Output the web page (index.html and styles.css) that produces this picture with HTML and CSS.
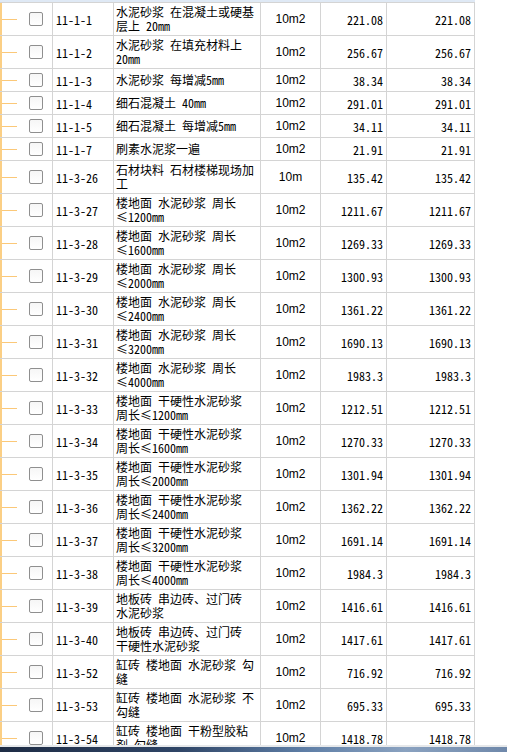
FILE: index.html
```html
<!DOCTYPE html>
<html lang="zh-CN">
<head>
<meta charset="utf-8">
<title>定额列表</title>
<link rel="stylesheet" href="styles.css">
</head>
<body>
<div class="screen">
  <div class="grid">
    <div class="topstrip"></div>
    <div class="row r2"><div class="c tree"><span class="stub"></span><span class="cb"></span></div><div class="c code">11-1-1</div><div class="c desc">水泥砂浆 在混凝土或硬基层上 20mm</div><div class="c unit">10m2</div><div class="c num">221.08</div><div class="c num">221.08</div></div>
    <div class="row r2"><div class="c tree"><span class="stub"></span><span class="cb"></span></div><div class="c code">11-1-2</div><div class="c desc">水泥砂浆 在填充材料上 20mm</div><div class="c unit">10m2</div><div class="c num">256.67</div><div class="c num">256.67</div></div>
    <div class="row r1"><div class="c tree"><span class="stub"></span><span class="cb"></span></div><div class="c code">11-1-3</div><div class="c desc">水泥砂浆 每增减5mm</div><div class="c unit">10m2</div><div class="c num">38.34</div><div class="c num">38.34</div></div>
    <div class="row r1"><div class="c tree"><span class="stub"></span><span class="cb"></span></div><div class="c code">11-1-4</div><div class="c desc">细石混凝土 40mm</div><div class="c unit">10m2</div><div class="c num">291.01</div><div class="c num">291.01</div></div>
    <div class="row r1"><div class="c tree"><span class="stub"></span><span class="cb"></span></div><div class="c code">11-1-5</div><div class="c desc">细石混凝土 每增减5mm</div><div class="c unit">10m2</div><div class="c num">34.11</div><div class="c num">34.11</div></div>
    <div class="row r1"><div class="c tree"><span class="stub"></span><span class="cb"></span></div><div class="c code">11-1-7</div><div class="c desc">刷素水泥浆一遍</div><div class="c unit">10m2</div><div class="c num">21.91</div><div class="c num">21.91</div></div>
    <div class="row r2"><div class="c tree"><span class="stub"></span><span class="cb"></span></div><div class="c code">11-3-26</div><div class="c desc">石材块料 石材楼梯现场加工</div><div class="c unit">10m</div><div class="c num">135.42</div><div class="c num">135.42</div></div>
    <div class="row r2"><div class="c tree"><span class="stub"></span><span class="cb"></span></div><div class="c code">11-3-27</div><div class="c desc">楼地面 水泥砂浆 周长≤1200mm</div><div class="c unit">10m2</div><div class="c num">1211.67</div><div class="c num">1211.67</div></div>
    <div class="row r2"><div class="c tree"><span class="stub"></span><span class="cb"></span></div><div class="c code">11-3-28</div><div class="c desc">楼地面 水泥砂浆 周长≤1600mm</div><div class="c unit">10m2</div><div class="c num">1269.33</div><div class="c num">1269.33</div></div>
    <div class="row r2"><div class="c tree"><span class="stub"></span><span class="cb"></span></div><div class="c code">11-3-29</div><div class="c desc">楼地面 水泥砂浆 周长≤2000mm</div><div class="c unit">10m2</div><div class="c num">1300.93</div><div class="c num">1300.93</div></div>
    <div class="row r2"><div class="c tree"><span class="stub"></span><span class="cb"></span></div><div class="c code">11-3-30</div><div class="c desc">楼地面 水泥砂浆 周长≤2400mm</div><div class="c unit">10m2</div><div class="c num">1361.22</div><div class="c num">1361.22</div></div>
    <div class="row r2"><div class="c tree"><span class="stub"></span><span class="cb"></span></div><div class="c code">11-3-31</div><div class="c desc">楼地面 水泥砂浆 周长≤3200mm</div><div class="c unit">10m2</div><div class="c num">1690.13</div><div class="c num">1690.13</div></div>
    <div class="row r2"><div class="c tree"><span class="stub"></span><span class="cb"></span></div><div class="c code">11-3-32</div><div class="c desc">楼地面 水泥砂浆 周长≤4000mm</div><div class="c unit">10m2</div><div class="c num">1983.3</div><div class="c num">1983.3</div></div>
    <div class="row r2"><div class="c tree"><span class="stub"></span><span class="cb"></span></div><div class="c code">11-3-33</div><div class="c desc">楼地面 干硬性水泥砂浆 周长≤1200mm</div><div class="c unit">10m2</div><div class="c num">1212.51</div><div class="c num">1212.51</div></div>
    <div class="row r2"><div class="c tree"><span class="stub"></span><span class="cb"></span></div><div class="c code">11-3-34</div><div class="c desc">楼地面 干硬性水泥砂浆 周长≤1600mm</div><div class="c unit">10m2</div><div class="c num">1270.33</div><div class="c num">1270.33</div></div>
    <div class="row r2"><div class="c tree"><span class="stub"></span><span class="cb"></span></div><div class="c code">11-3-35</div><div class="c desc">楼地面 干硬性水泥砂浆 周长≤2000mm</div><div class="c unit">10m2</div><div class="c num">1301.94</div><div class="c num">1301.94</div></div>
    <div class="row r2"><div class="c tree"><span class="stub"></span><span class="cb"></span></div><div class="c code">11-3-36</div><div class="c desc">楼地面 干硬性水泥砂浆 周长≤2400mm</div><div class="c unit">10m2</div><div class="c num">1362.22</div><div class="c num">1362.22</div></div>
    <div class="row r2"><div class="c tree"><span class="stub"></span><span class="cb"></span></div><div class="c code">11-3-37</div><div class="c desc">楼地面 干硬性水泥砂浆 周长≤3200mm</div><div class="c unit">10m2</div><div class="c num">1691.14</div><div class="c num">1691.14</div></div>
    <div class="row r2"><div class="c tree"><span class="stub"></span><span class="cb"></span></div><div class="c code">11-3-38</div><div class="c desc">楼地面 干硬性水泥砂浆 周长≤4000mm</div><div class="c unit">10m2</div><div class="c num">1984.3</div><div class="c num">1984.3</div></div>
    <div class="row r2"><div class="c tree"><span class="stub"></span><span class="cb"></span></div><div class="c code">11-3-39</div><div class="c desc">地板砖 串边砖、过门砖 水泥砂浆</div><div class="c unit">10m2</div><div class="c num">1416.61</div><div class="c num">1416.61</div></div>
    <div class="row r2"><div class="c tree"><span class="stub"></span><span class="cb"></span></div><div class="c code">11-3-40</div><div class="c desc">地板砖 串边砖、过门砖 干硬性水泥砂浆</div><div class="c unit">10m2</div><div class="c num">1417.61</div><div class="c num">1417.61</div></div>
    <div class="row r2"><div class="c tree"><span class="stub"></span><span class="cb"></span></div><div class="c code">11-3-52</div><div class="c desc">缸砖 楼地面 水泥砂浆 勾缝</div><div class="c unit">10m2</div><div class="c num">716.92</div><div class="c num">716.92</div></div>
    <div class="row r2"><div class="c tree"><span class="stub"></span><span class="cb"></span></div><div class="c code">11-3-53</div><div class="c desc">缸砖 楼地面 水泥砂浆 不勾缝</div><div class="c unit">10m2</div><div class="c num">695.33</div><div class="c num">695.33</div></div>
    <div class="row r2"><div class="c tree"><span class="stub"></span><span class="cb"></span></div><div class="c code">11-3-54</div><div class="c desc">缸砖 楼地面 干粉型胶粘剂 勾缝</div><div class="c unit">10m2</div><div class="c num">1418.78</div><div class="c num">1418.78</div></div>
  </div>
  <div class="taskbar"></div>
</div>
</body>
</html>
```

FILE: styles.css
```css
* { box-sizing: border-box; }
html, body { margin: 0; padding: 0; background: #ffffff; }
body {
  width: 507px;
  height: 752px;
  overflow: hidden;
  font-family: "Noto Sans Mono CJK SC", "Noto Sans CJK SC", sans-serif;
  font-size: 12px;
  color: #000000;
}
.screen {
  display: flex;
  flex-direction: column;
  height: 752px;
}
.grid {
  flex: 1;
  overflow: hidden;
  width: 507px;
  background: #ffffff;
}
.topstrip {
  width: 475px;
  height: 3px;
  background: #dfe9f5;
  border-bottom: 1px solid #d4d4d4;
}
.row {
  display: grid;
  grid-template-columns: 53px 61px 147px 60px 66px 88px;
  width: 475px;
  border-bottom: 1px solid #d4d4d4;
}
.r2 { height: 33px; }
.r1 { height: 23px; }
.c {
  border-right: 1px solid #d4d4d4;
  display: flex;
  align-items: center;
  overflow: hidden;
  white-space: nowrap;
}
.tree {
  border-left: 2px solid #fbcf85;
}
.stub {
  width: 15px;
  height: 1px;
  background: #fbc878;
  flex: none;
}
.cb {
  width: 14px;
  height: 14px;
  margin-left: 12px;
  border: 1px solid #8f8f8f;
  border-radius: 2px;
  background: linear-gradient(#f6f6f6, #ffffff);
  flex: none;
}
.code {
  padding-left: 3px;
  letter-spacing: 0;
}
.desc {
  white-space: normal;
  line-height: 14px;
  padding: 0 3px 0 2px;
}
.unit {
  justify-content: center;
  font-family: "Liberation Sans", sans-serif;
  font-size: 12px;
}
.num {
  justify-content: flex-end;
  padding-right: 3px;
}
.taskbar {
  height: 7px;
  flex: none;
  border-top: 2px solid #e6e8ea;
  background: linear-gradient(90deg, #1e2c45 0%, #2f4566 35%, #5e7ea6 60%, #8aa2c0 80%, #6f88aa 100%);
}
```
